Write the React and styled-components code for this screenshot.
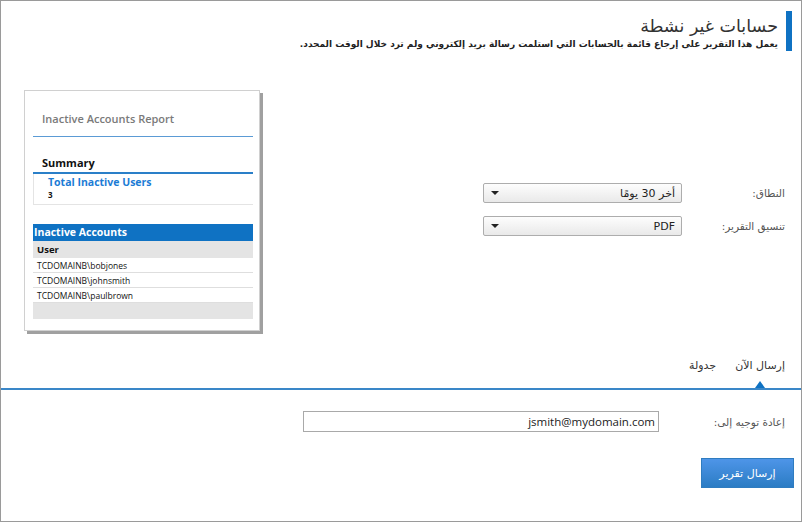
import React from "react";
import styled, { createGlobalStyle } from "styled-components";

const Global = createGlobalStyle`
  html, body { margin: 0; padding: 0; background: #fff; }
  * { box-sizing: border-box; }
`;

const Page = styled.div`
  width: 802px;
  height: 522px;
  border: 1px solid #9a9a9a;
  direction: rtl;
  font-family: "Segoe UI", "Noto Sans", "DejaVu Sans", sans-serif;
  color: #333;
  overflow: hidden;
`;

const Header = styled.header`
  display: flex;
  align-items: flex-start;
  gap: 8px;
  height: 52px;
  padding: 10px 9px 0 0;
`;

const Accent = styled.div`
  width: 6px;
  height: 40px;
  background: #0f72c3;
`;

const HeaderText = styled.div`
  display: flex;
  flex-direction: column;
  padding-top: 3px;
`;

const Title = styled.h1`
  margin: 0;
  font-family: "DejaVu Sans", sans-serif;
  font-weight: normal;
  font-size: 17.5px;
  line-height: 24px;
  color: #333;
`;

const Subtitle = styled.p`
  margin: 0;
  font-family: "DejaVu Sans", sans-serif;
  font-weight: bold;
  font-size: 9px;
  line-height: 13px;
  color: #222;
`;

const Middle = styled.section`
  display: flex;
  justify-content: space-between;
  align-items: flex-start;
  height: 301px;
  padding: 0 16px 0 0;
`;

const Form = styled.div`
  display: flex;
  flex-direction: column;
  gap: 13px;
  padding-top: 130px;
`;

const FormRow = styled.div`
  display: flex;
  align-items: center;
`;

const Label = styled.label`
  width: ${p => p.$w}px;
  font-family: "DejaVu Sans", sans-serif;
  font-size: 10.5px;
  color: #555;
`;

const Select = styled.div`
  width: 199px;
  height: 20px;
  border: 1px solid #adadad;
  border-radius: 2px;
  background: linear-gradient(#fdfdfd, #e9e9e9);
  display: flex;
  align-items: center;
  justify-content: space-between;
  padding: 0 6px 0 7px;
  font-family: "DejaVu Sans", sans-serif;
  font-size: 11px;
  color: #222;
`;

const Arrow = styled.span`
  width: 0;
  height: 0;
  border-left: 4px solid transparent;
  border-right: 4px solid transparent;
  border-top: 4px solid #222;
`;

const Preview = styled.div`
  margin-left: 23px;
  margin-top: 37px;
  width: 236px;
  height: 241px;
  border: 1px solid #d0d0d0;
  box-shadow: 3px 3px 0 #a0a0a0;
  background: #fff;
  direction: ltr;
  font-family: "Open Sans", "Noto Sans", sans-serif;
  padding: 0 6px 0 8px;
  display: flex;
  flex-direction: column;
`;

const ReportTitle = styled.div`
  font-size: 11px;
  font-weight: 600;
  color: #7a7a7a;
  line-height: 15px;
  padding: 20px 0 0 9px;
  height: 46px;
  border-bottom: 1px solid #5b9bd5;
`;

const SummaryTitle = styled.div`
  font-size: 11px;
  font-weight: 700;
  color: #111;
  line-height: 15px;
  padding: 18px 0 0 9px;
  height: 37px;
  border-bottom: 2px solid #2a7fc8;
`;

const SummaryBox = styled.div`
  border-left: 1px solid #e4e4e4;
  border-bottom: 1px solid #e4e4e4;
  padding: 1px 0 0 14px;
  height: 31px;
`;

const SummaryLabel = styled.div`
  font-size: 10.5px;
  font-weight: 700;
  color: #1c7cd5;
  line-height: 15px;
`;

const SummaryValue = styled.div`
  font-size: 8px;
  font-weight: 700;
  color: #111;
  line-height: 10px;
`;

const TableHead = styled.div`
  margin-top: 19px;
  height: 17px;
  background: #0f72c3;
  color: #fff;
  font-size: 10.5px;
  font-weight: 700;
  line-height: 17px;
  padding-left: 1px;
`;

const ColHead = styled.div`
  height: 17px;
  background: #e4e4e4;
  font-size: 9.5px;
  font-weight: 700;
  color: #111;
  line-height: 17px;
  padding-left: 4px;
`;

const Row = styled.div`
  height: 15px;
  border-bottom: 1px solid #dedede;
  font-size: 8.5px;
  color: #111;
  line-height: 15px;
  padding-left: 4px;
`;

const TableFoot = styled.div`
  height: 16px;
  background: #e4e4e4;
`;

const Tabs = styled.nav`
  display: flex;
  gap: 19px;
  padding: 0 16px 0 0;
  height: 36px;
  border-bottom: 2px solid #3a87c8;
`;

const Tab = styled.div`
  position: relative;
  font-family: "DejaVu Sans", sans-serif;
  font-size: 11px;
  color: #333;
  padding-top: 5px;
  ${p => p.$active && `
    &::after {
      content: "";
      position: absolute;
      bottom: 0;
      left: 50%;
      margin-left: -5px;
      border-left: 5px solid transparent;
      border-right: 5px solid transparent;
      border-bottom: 7px solid #0f72c3;
    }
  `}
`;

const Lower = styled.section`
  display: flex;
  flex-direction: column;
  align-items: flex-start;
  padding: 21px 16px 0 0;
`;

const Input = styled.div`
  width: 356px;
  height: 21px;
  border: 1px solid #a9a9a9;
  padding: 0 3px;
  display: flex;
  align-items: center;
  font-family: "Segoe UI", "Open Sans", "Noto Sans", sans-serif;
  font-size: 11.5px;
  color: #222;
`;

const Button = styled.button`
  margin: 26px -9px 0 0;
  width: 93px;
  height: 30px;
  border: 1px solid #2f7cc0;
  background: linear-gradient(#4e95e8, #2b7cc4);
  color: #fff;
  font-family: "DejaVu Sans", sans-serif;
  font-size: 11px;
  cursor: pointer;
`;

export default function App() {
  return (
    <>
      <Global />
      <Page>
        <Header>
          <Accent />
          <HeaderText>
            <Title>حسابات غير نشطة</Title>
            <Subtitle>
              يعمل هذا التقرير على إرجاع قائمة بالحسابات التي استلمت رسالة بريد إلكتروني ولم ترد خلال الوقت المحدد.
            </Subtitle>
          </HeaderText>
        </Header>
        <Middle>
          <Form>
            <FormRow>
              <Label $w={103}>النطاق:</Label>
              <Select>
                <span>أخر 30 يومًا</span>
                <Arrow />
              </Select>
            </FormRow>
            <FormRow>
              <Label $w={103}>تنسيق التقرير:</Label>
              <Select>
                <span>PDF</span>
                <Arrow />
              </Select>
            </FormRow>
          </Form>
          <Preview>
            <ReportTitle>Inactive Accounts Report</ReportTitle>
            <SummaryTitle>Summary</SummaryTitle>
            <SummaryBox>
              <SummaryLabel>Total Inactive Users</SummaryLabel>
              <SummaryValue>3</SummaryValue>
            </SummaryBox>
            <TableHead>Inactive Accounts</TableHead>
            <ColHead>User</ColHead>
            <Row>TCDOMAINB\bobjones</Row>
            <Row>TCDOMAINB\johnsmith</Row>
            <Row>TCDOMAINB\paulbrown</Row>
            <TableFoot />
          </Preview>
        </Middle>
        <Tabs>
          <Tab $active>إرسال الآن</Tab>
          <Tab>جدولة</Tab>
        </Tabs>
        <Lower>
          <FormRow>
            <Label $w={126}>إعادة توجيه إلى:</Label>
            <Input>jsmith@mydomain.com</Input>
          </FormRow>
          <Button>إرسال تقرير</Button>
        </Lower>
      </Page>
    </>
  );
}
